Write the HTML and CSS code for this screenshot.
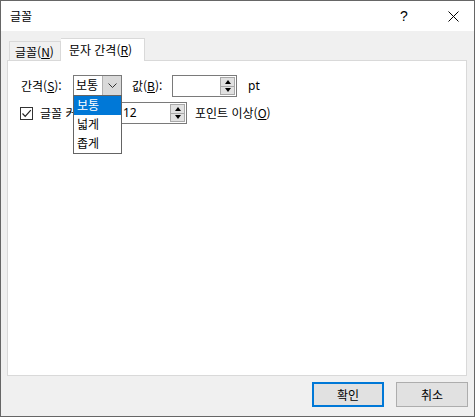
FILE: index.html
```html
<!DOCTYPE html>
<html lang="ko">
<head>
<meta charset="utf-8">
<title>글꼴</title>
<link rel="stylesheet" href="styles.css">
</head>
<body>
<div class="window">
  <div class="titlebar">
    <span class="title">글꼴</span>
    <span class="help">?</span>
    <span class="close">
      <svg width="11" height="11" viewBox="0 0 11 11"><path d="M0.5 0.5L10.5 10.5M10.5 0.5L0.5 10.5" stroke="#000" stroke-width="1"/></svg>
    </span>
  </div>
  <div class="body">
    <div class="tabs">
      <div class="tab">글꼴(<u>N</u>)</div>
      <div class="tab active">문자 간격(<u>R</u>)</div>
    </div>
    <div class="panel">
      <div class="row row1">
        <span class="label lbl-spacing">간격(<u>S</u>):</span>
        <div class="combo">
          <span class="combo-text">보통</span>
          <span class="combo-btn">
            <svg width="9" height="6" viewBox="0 0 9 6"><path d="M0.5 0.5L4.5 4.5L8.5 0.5" fill="none" stroke="#333" stroke-width="1"/></svg>
          </span>
          <ul class="dropdown">
            <li class="selected">보통</li>
            <li>넓게</li>
            <li>좁게</li>
          </ul>
        </div>
        <span class="label lbl-value">값(<u>B</u>):</span>
        <div class="spin spin-value">
          <span class="spin-text"></span>
          <span class="spin-btns">
            <span class="sb up"><i></i></span>
            <span class="sb down"><i></i></span>
          </span>
        </div>
        <span class="label lbl-pt">pt</span>
      </div>
      <div class="row row2">
        <span class="check">
          <svg width="11" height="11" viewBox="0 0 11 11"><path d="M1.5 5.5L4.2 8.3L9.8 2.2" fill="none" stroke="#222" stroke-width="1.2"/></svg>
        </span>
        <span class="label lbl-kern">글꼴 커닝(<u>K</u>):</span>
        <div class="spin spin-kern">
          <span class="spin-text">12</span>
          <span class="spin-btns">
            <span class="sb up"><i></i></span>
            <span class="sb down"><i></i></span>
          </span>
        </div>
        <span class="label lbl-above">포인트 이상(<u>O</u>)</span>
      </div>
    </div>
    <div class="buttons">
      <button class="btn default">확인</button>
      <button class="btn">취소</button>
    </div>
  </div>
</div>
</body>
</html>
```

FILE: styles.css
```css
* { box-sizing: border-box; }
html, body { margin: 0; padding: 0; }
body {
  width: 475px;
  height: 417px;
  font-family: "Noto Sans CJK KR", "Noto Sans", sans-serif;
  font-size: 12px;
  line-height: 16px;
  color: #000;
  background: #fff;
}
u { text-decoration: underline; text-underline-offset: 1px; }

.window {
  width: 475px;
  height: 417px;
  border: 1px solid #666;
  background: #f0f0f0;
  display: flex;
  flex-direction: column;
}

.titlebar {
  height: 30px;
  background: #fff;
  display: flex;
  align-items: center;
  padding-left: 9px;
  flex-shrink: 0;
}
.title { flex: 1; font-size: 12px; }
.help {
  font-family: "Liberation Sans", sans-serif;
  font-size: 14px;
  width: 14px;
  margin-right: 34px;
}
.close {
  width: 11px;
  height: 11px;
  margin-right: 15px;
  display: flex;
}

.body {
  flex: 1;
  display: flex;
  flex-direction: column;
  padding: 7px 7px 0 6px;
}

.tabs {
  display: flex;
  align-items: flex-end;
  height: 22px;
  padding-left: 2px;
  position: relative;
  z-index: 1;
}
.tab {
  height: 19px;
  border: 1px solid #d9d9d9;
  border-bottom: none;
  background: #f0f0f0;
  padding: 1px 6px 0 5px;
  line-height: 17px;
  white-space: nowrap;
}
.tab.active {
  height: 23px;
  margin-bottom: -1px;
  background: #fff;
  padding: 2px 6px 0 8px;
  border-left: none;
  width: 84px;
}

.panel {
  height: 316px;
  background: #fff;
  border: 1px solid #d9d9d9;
  padding: 14px 0 0 13px;
  position: relative;
}

.row {
  display: flex;
  align-items: center;
}
.row1 { height: 22px; }
.row2 { height: 22px; margin-top: 5px; }

.label { white-space: nowrap; }
.lbl-spacing { width: 52px; }
.lbl-value { margin-left: 10px; width: 40px; }
.lbl-pt { margin-left: 11px; font-family: "Noto Sans", sans-serif; }

.combo {
  position: relative;
  width: 49px;
  height: 21px;
  border: 1px solid #7a7a7a;
  display: flex;
  background: #fff;
  margin-top: -1px;
}
.combo-text {
  flex: 1;
  padding-left: 2px;
  line-height: 18px;
}
.combo-btn {
  width: 19px;
  background: #d9d9d9;
  border-left: 1px solid #b0b0b0;
  display: flex;
  align-items: center;
  justify-content: center;
}

.dropdown {
  position: absolute;
  left: -1px;
  top: 19px;
  width: 49px;
  margin: 0;
  padding: 0;
  list-style: none;
  background: #fff;
  border: 1px solid #646464;
  z-index: 5;
}
.dropdown li {
  height: 19px;
  line-height: 18px;
  padding-left: 3px;
}
.dropdown li.selected {
  background: #0078d7;
  color: #fff;
}

.spin {
  height: 22px;
  border: 1px solid #7a7a7a;
  background: #fff;
  display: flex;
  align-items: stretch;
}
.spin-value { width: 65px; }
.spin-kern { width: 68px; }
.spin-text {
  flex: 1;
  padding-left: 3px;
  line-height: 20px;
  font-family: "Noto Sans", sans-serif;
}
.spin-btns {
  width: 16px;
  display: flex;
  flex-direction: column;
  padding: 1px 1px 1px 0;
}
.sb {
  flex: 1;
  background: #e1e1e1;
  border: 1px solid #a8a8a8;
  display: flex;
  align-items: center;
  justify-content: center;
}
.sb.down { border-top: none; }
.sb i {
  width: 0;
  height: 0;
  border-left: 3px solid transparent;
  border-right: 3px solid transparent;
}
.sb.up i { border-bottom: 4px solid #000; }
.sb.down i { border-top: 4px solid #000; }

.check {
  width: 13px;
  height: 13px;
  border: 1px solid #333;
  margin-left: -1px;
  margin-right: 7px;
  display: flex;
  align-items: center;
  justify-content: center;
  background: #fff;
}
.lbl-kern { width: 79px; overflow: hidden; }
.lbl-above { margin-left: 8px; }

.buttons {
  display: flex;
  justify-content: flex-end;
  gap: 12px;
  padding-top: 6px;
  padding-right: 0;
  margin-right: -1px;
}
.btn {
  width: 72px;
  height: 25px;
  background: #e1e1e1;
  border: 1px solid #adadad;
  font-family: "Noto Sans CJK KR", sans-serif;
  font-size: 12px;
  line-height: 16px;
  padding: 0;
  color: #000;
}
.btn.default {
  border: 2px solid #0078d7;
}
```
